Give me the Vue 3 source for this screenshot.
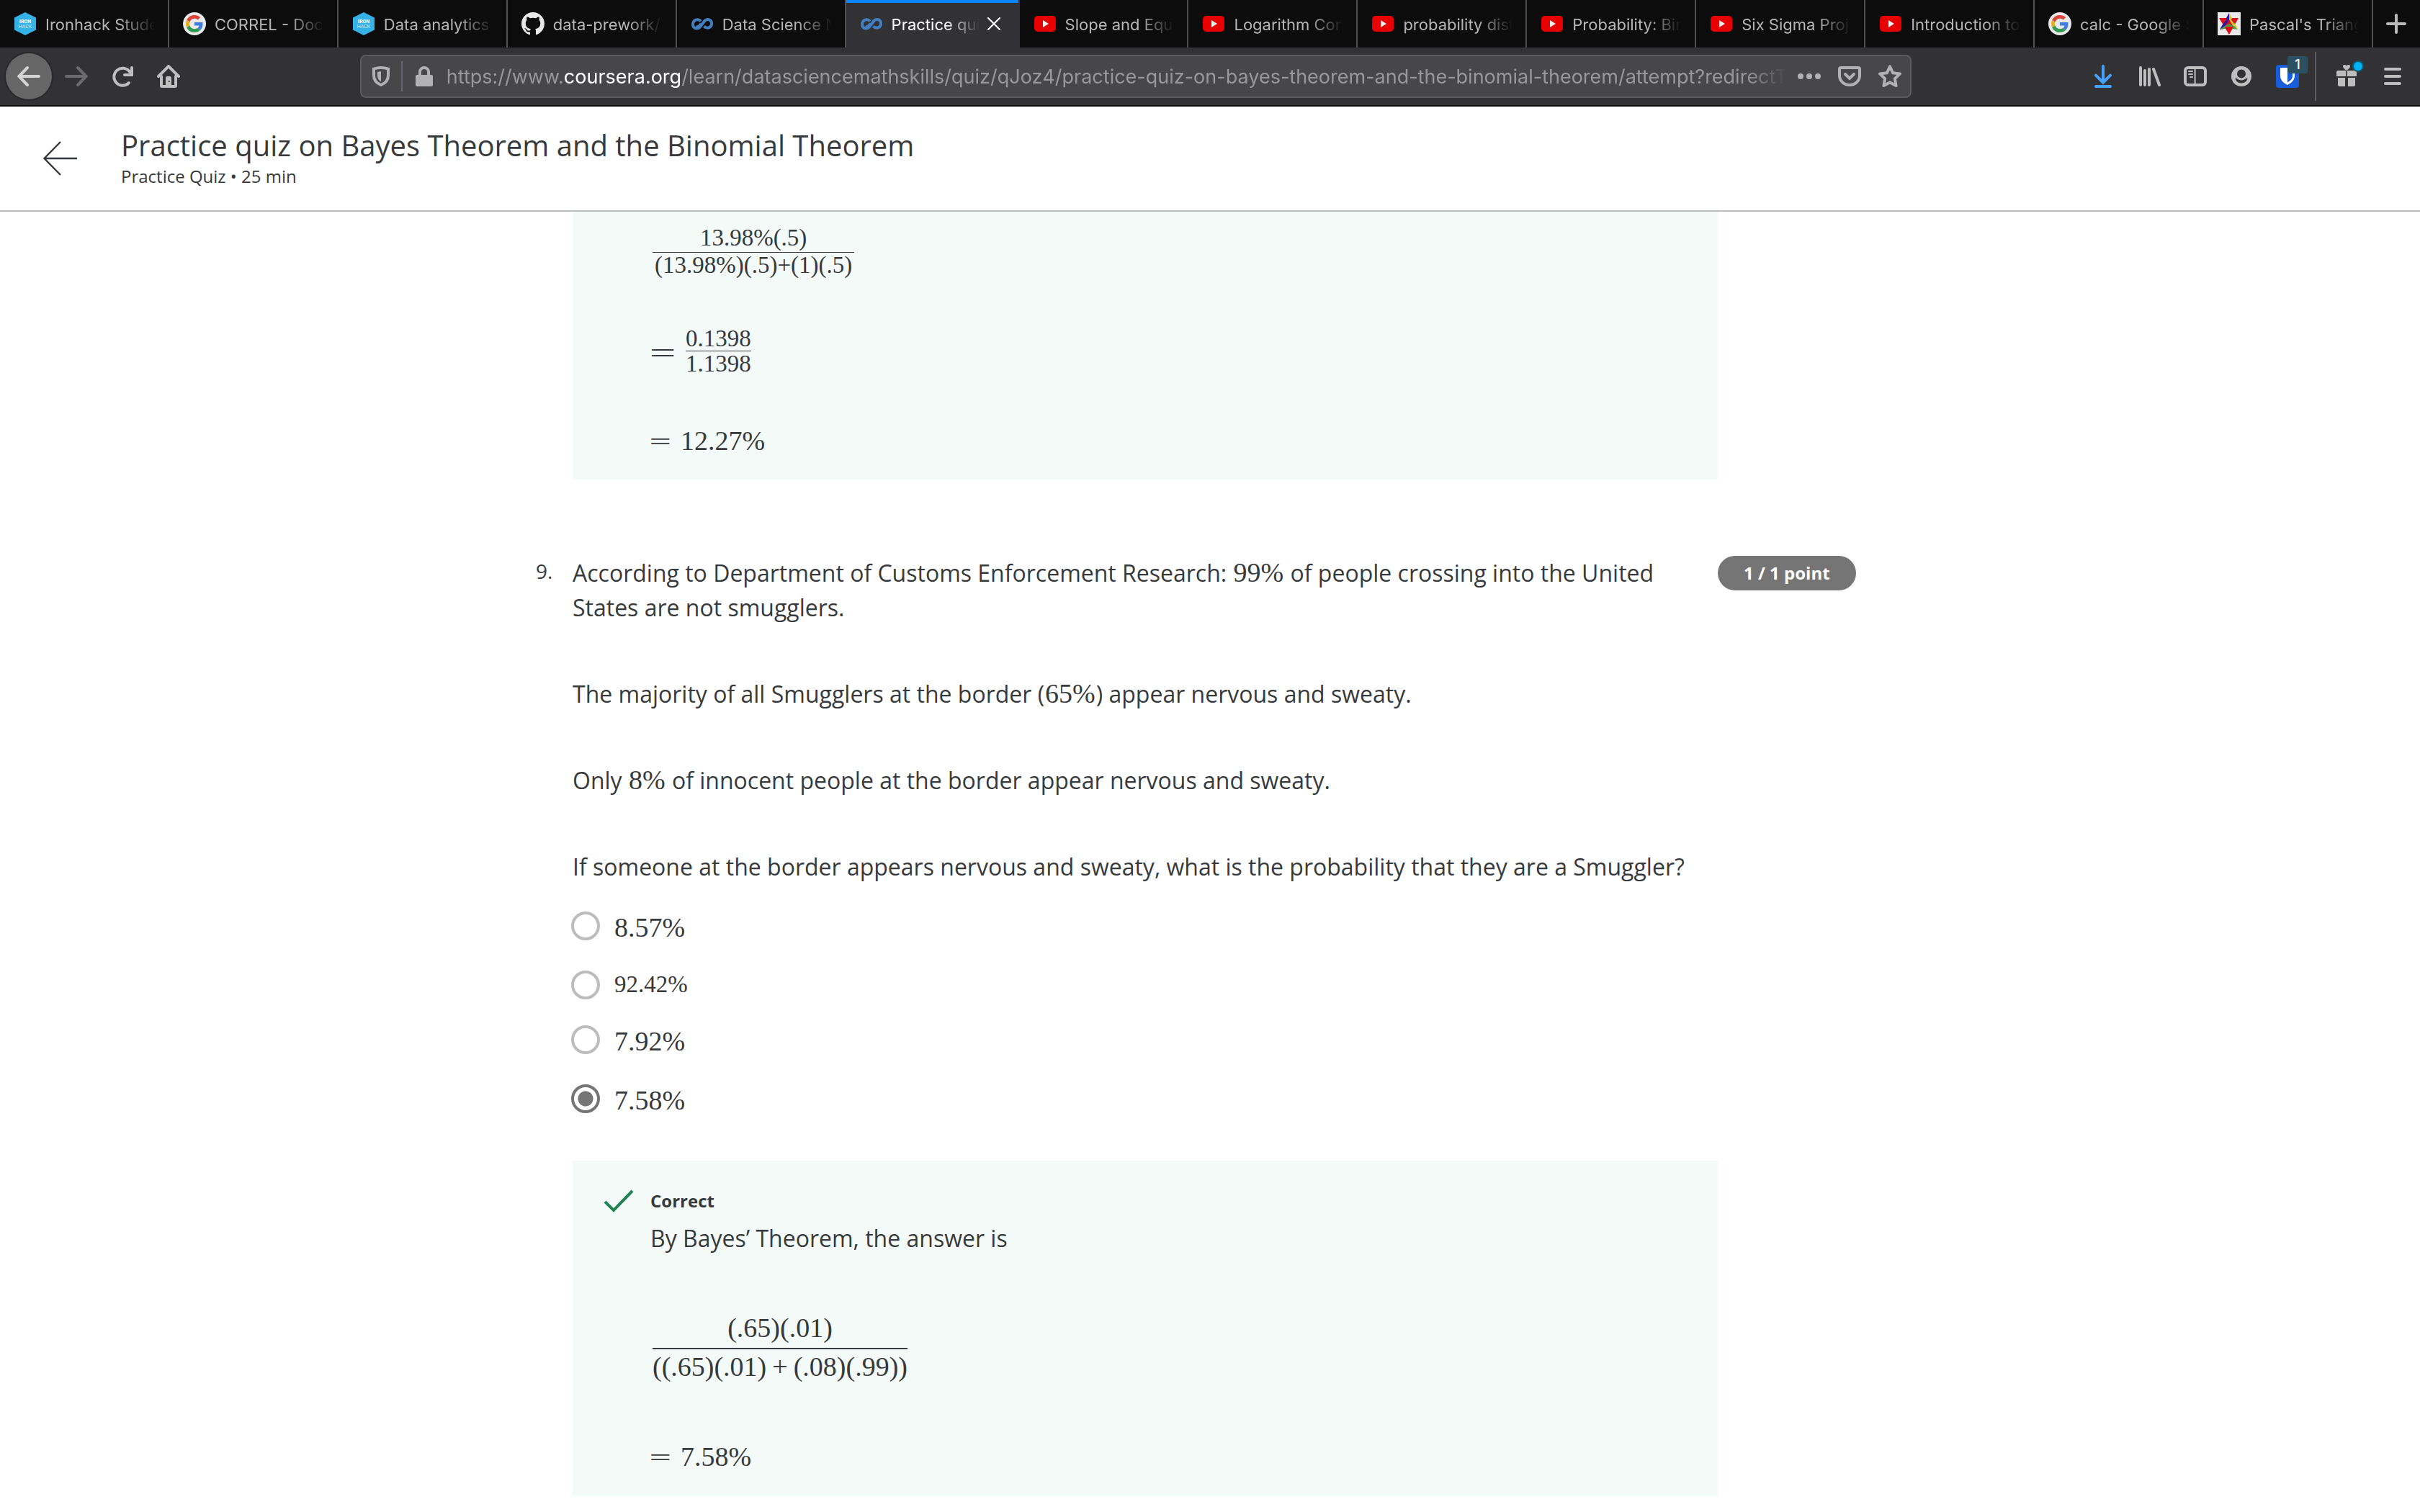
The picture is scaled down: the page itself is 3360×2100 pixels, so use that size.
<script setup>
import { ref } from 'vue'

const tabs = [
  { icon: 'ironhack', title: 'Ironhack Stude' },
  { icon: 'google', title: 'CORREL - Docs' },
  { icon: 'ironhack', title: 'Data analytics' },
  { icon: 'github', title: 'data-prework/2' },
  { icon: 'coursera', title: 'Data Science M' },
  { icon: 'coursera', title: 'Practice qui', active: true },
  { icon: 'youtube', title: 'Slope and Equa' },
  { icon: 'youtube', title: 'Logarithm Con' },
  { icon: 'youtube', title: 'probability dist' },
  { icon: 'youtube', title: 'Probability: Bin' },
  { icon: 'youtube', title: 'Six Sigma Proj' },
  { icon: 'youtube', title: 'Introduction to' },
  { icon: 'google', title: 'calc - Google S' },
  { icon: 'pascal', title: "Pascal's Triang" },
]

const options = [
  { value: '8.57%' },
  { value: '92.42%', small: true },
  { value: '7.92%' },
  { value: '7.58%' },
]
const answer = ref('7.58%')
</script>

<template>
  <div class="window">
    <div class="tabbar">
      <div v-for="(tab, i) in tabs" :key="i" class="tab" :class="{ active: tab.active }">
        <button class="tab-button" type="button">
          <svg v-if="tab.icon === 'ironhack'" class="favicon" viewBox="0 0 32 32">
            <path d="M16 0 31 7.500V24.500L16 32 1 24.500V7.500z" fill="#34b1e6" />
            <text x="16" y="15" text-anchor="middle" class="hex-name">IRON</text>
            <text x="16" y="22" text-anchor="middle" class="hex-name light">HACK</text>
          </svg>
          <svg v-else-if="tab.icon === 'google'" class="favicon" viewBox="0 0 32 32">
            <circle cx="16" cy="16" r="16" fill="#e9e9e9" />
            <g transform="translate(4 4) scale(.5)">
              <path fill="#db4437" d="M24 9.500c3.540 0 6.710 1.220 9.210 3.600l6.850-6.850C35.900 2.380 30.470 0 24 0 14.620 0 6.510 5.380 2.560 13.220l7.980 6.190C12.430 13.720 17.740 9.500 24 9.500z" />
              <path fill="#3f7ee0" d="M46.980 24.550c0-1.570-.15-3.090-.38-4.550H24v9.020h12.940c-.58 2.960-2.260 5.480-4.780 7.180l7.730 6c4.510-4.180 7.090-10.360 7.090-17.650z" />
              <path fill="#e6b023" d="M10.530 28.590c-.48-1.450-.76-2.990-.76-4.590s.27-3.140.76-4.590l-7.980-6.190C.92 16.460 0 20.120 0 24c0 3.880.92 7.540 2.560 10.780l7.970-6.190z" />
              <path fill="#329b50" d="M24 48c6.480 0 11.930-2.130 15.890-5.810l-7.730-6c-2.150 1.450-4.920 2.300-8.160 2.300-6.260 0-11.570-4.220-13.470-9.910l-7.980 6.190C6.510 42.620 14.620 48 24 48z" />
            </g>
          </svg>
          <svg v-else-if="tab.icon === 'github'" class="favicon" viewBox="0 0 16 16">
            <path fill="#e8e8e8" d="M8 0C3.580 0 0 3.580 0 8c0 3.540 2.290 6.530 5.470 7.590.4.070.55-.17.55-.38 0-.19-.01-.82-.01-1.490-2.010.37-2.530-.49-2.690-.94-.09-.23-.48-.94-.82-1.130-.28-.15-.68-.52-.01-.53.63-.01 1.080.58 1.230.82.72 1.210 1.870.87 2.330.66.07-.52.28-.87.51-1.070-1.780-.2-3.640-.89-3.640-3.950 0-.87.31-1.590.82-2.150-.08-.2-.36-1.020.08-2.120 0 0 .67-.21 2.200.82.64-.18 1.320-.27 2-.27s1.360.09 2 .27c1.530-1.040 2.200-.82 2.200-.82.44 1.100.16 1.920.08 2.120.51.56.82 1.270.82 2.150 0 3.070-1.870 3.750-3.650 3.950.29.25.54.73.54 1.480 0 1.070-.01 1.930-.01 2.200 0 .21.15.46.55.38A8.010 8.010 0 0 0 16 8c0-4.420-3.580-8-8-8z" />
          </svg>
          <svg v-else-if="tab.icon === 'coursera'" class="favicon" viewBox="0 0 32 32">
            <path d="M14 12C12 9.500 8 9 5.500 11S2 17.500 4 20s6 3 8.500.5l7-9C22 9 26 9 28 11.500s1.500 6.500-1 8.500-6.500 1.500-8.500-1M14.500 15.500l-2.500 3c-1.500 1.500-3 1.500-4.500.5" transform="translate(0 .4)" fill="none" stroke="#417fc0" stroke-width="4" stroke-linecap="butt" />
          </svg>
          <svg v-else-if="tab.icon === 'youtube'" class="favicon" viewBox="0 0 32 32">
            <rect x="1" y="5" width="30" height="22" rx="5" fill="#e80000" />
            <path d="M13 11l8 5-8 5z" fill="#eee" />
          </svg>
          <svg v-else class="favicon" viewBox="0 0 32 32">
            <path fill="#e9e9e9" d="M0 0h32v32H0z" />
            <path fill="#e00c18" d="M2 8h27L16 31z" />
            <path fill="#2b17a8" d="M16 1 3 24l5-1 8-13z" />
            <path fill="#d4cc2c" d="M16 1v9l7 12 5 1z" />
            <path fill="#4c9a4a" d="M3 24l7-5 6-3 6 3 6 5-7-1H9z" />
            <path fill="#e00c18" d="M10 20h12l-6 10zM4 9h9l-5 7zM18 9h10l-5 7z" />
          </svg>
          <span class="tab-title">{{ tab.title }}</span>
        </button>
        <button v-if="tab.active" class="close" type="button" aria-label="Close tab">
          <svg viewBox="0 0 20 20" width="20" height="20"><path d="M2 2l16 16M18 2 2 18" stroke="#fff" stroke-width="2" stroke-linecap="round" /></svg>
        </button>
      </div>
      <button class="new-tab" type="button" aria-label="New tab">
        <svg viewBox="0 0 28 28" width="28" height="28"><path d="M14 2v24M2 14h24" stroke="#b9b9ba" stroke-width="4" stroke-linecap="round" /></svg>
      </button>
    </div>

    <div class="toolbar">
      <button class="tool back" type="button" aria-label="Back">
        <svg class="glyph" viewBox="0 0 16 16"><path d="M15 8H1.200M7 2 1.200 8 7 14" /></svg>
      </button>
      <button class="tool forward" type="button" aria-label="Forward">
        <svg class="glyph" viewBox="0 0 16 16"><path d="M1 8h13.800M9 2l5.800 6L9 14" /></svg>
      </button>
      <button class="tool" type="button" aria-label="Reload">
        <svg class="glyph" viewBox="0 0 16 16"><path d="M12.500 12.500A6 6 0 1 1 13 4.800" /><path class="solid" d="M15.500 2v5.500a.5.500 0 0 1-.5.500H9.500a1 1 0 0 1-.7-1.700l1-.3h3.700V2a1 1 0 0 1 2 0z" /></svg>
      </button>
      <button class="tool" type="button" aria-label="Home">
        <svg class="glyph" viewBox="0 0 16 16"><path d="M1 8l7-7 7 7M3 8v6.500c0 .3.200.5.500.5h9c.3 0 .5-.2.500-.5V8" /><path class="solid" fill-rule="evenodd" d="M6 15V9.500C6 8.500 6.500 8 7 8h2c.5 0 1 .5 1 1.500V15zM8 11h.8v1H8z" /></svg>
      </button>
      <div class="spring"></div>
      <div class="urlbar">
        <button class="identity shield" type="button" aria-label="Tracking protection">
          <svg class="glyph muted" viewBox="0 0 16 16"><path d="M8 2c2 0 3.500.3 5 .8v4.500c0 3-1.500 5.400-5 6.700-3.500-1.300-5-3.700-5-6.700V2.800C4.500 2.300 6 2 8 2z" /><path class="solid" d="M8 4.600v7.200C6.300 10.700 5.500 9.300 5.500 7.300V5C6.200 4.700 7 4.600 8 4.600z" /></svg>
        </button>
        <span class="url-divider"></span>
        <button class="identity" type="button" aria-label="Connection secure">
          <svg class="glyph muted" viewBox="0 0 16 16"><path d="M5 8V5a3 3 0 0 1 6 0v3" /><rect class="solid" x="2" y="7" width="12" height="8" rx="1" /></svg>
        </button>
        <div class="url" role="textbox" aria-label="Address" contenteditable="true" spellcheck="false">https://www.<span class="domain">coursera.org</span>/learn/datasciencemathskills/quiz/qJoz4/practice-quiz-on-bayes-theorem-and-the-binomial-theorem/attempt?redirectTo</div>
        <button class="page-action" type="button" aria-label="Page actions">
          <svg class="glyph muted" viewBox="0 0 16 16"><circle class="solid" cx="2" cy="8" r="2" /><circle class="solid" cx="8" cy="8" r="2" /><circle class="solid" cx="14" cy="8" r="2" /></svg>
        </button>
        <button class="page-action" type="button" aria-label="Save to Pocket">
          <svg class="glyph muted" viewBox="0 0 16 16"><path d="M2 2h12c.6 0 1 .4 1 1v4.500a7 6.500 0 0 1-14 0V3c0-.6.4-1 1-1zM5 6.500l3 3 3-3" /></svg>
        </button>
        <button class="page-action" type="button" aria-label="Bookmark">
          <svg class="glyph muted" viewBox="0 0 16 16"><path stroke-linejoin="round" d="M8 1.200l2 4.400 5 .6-3.600 3.400.9 4.900L8 12.200l-4.300 2.300.9-4.900L1 6.200l5-.6z" /></svg>
        </button>
      </div>
      <div class="spring"></div>
      <button class="tool download" type="button" aria-label="Downloads">
        <svg class="glyph" viewBox="0 0 16 16"><path d="M8 1v11M3 7.300l5 5 5-5M3 15h10" /></svg>
      </button>
      <button class="tool" type="button" aria-label="Library">
        <svg class="glyph" viewBox="0 0 16 16"><path d="M2 2v12M5 4v10M8 3v11M11 3l4 11" /></svg>
      </button>
      <button class="tool" type="button" aria-label="Sidebars">
        <svg class="glyph" viewBox="0 0 16 16"><rect x="1" y="2" width="14" height="12" rx="2" /><path stroke-width="1" d="M7.800 3v10M3.500 4.500H6M3.500 6.500H6M4.500 8.500H6" /></svg>
      </button>
      <button class="tool" type="button" aria-label="Account">
        <svg class="glyph" viewBox="0 0 16 16"><circle class="solid" cx="8" cy="8" r="7" /><g fill="#323234" stroke="none"><circle cx="8" cy="6.200" r="3" /><path d="M3.800 9.300c1.400 0 2 1.500 4.200 1.500s2.800-1.500 4.200-1.500c0 1.900-1.800 3.400-4.200 3.400s-4.200-1.500-4.200-3.400z" /></g></svg>
      </button>
      <button class="tool vault" type="button" aria-label="Bitwarden">
        <svg class="glyph" viewBox="0 0 32 32"><rect width="32" height="32" rx="4" fill="#175ddc" stroke="none" /><path d="M16 4h10v11c0 6-4 10-10 13C10 25 6 21 6 15V4zm0 3v17.500c4-2.300 7-5 7-9V7z" fill="#fff" stroke="none" fill-rule="evenodd" /></svg>
        <span class="badge">1</span>
      </button>
      <span class="separator"></span>
      <button class="tool gift" type="button" aria-label="What's new">
        <svg class="glyph" viewBox="0 0 16 16"><path class="solid" d="M2 4h5.600v4H1V5a1 1 0 0 1 1-1zM8.400 4H14a1 1 0 0 1 1 1v3H8.400zM2 9h5v6H3a1 1 0 0 1-1-1zM9 9h5v5a1 1 0 0 1-1 1H9zM8 4C6.300 2.700 5.500 2 5.500 1c0-1.200 1.800-1.500 2.500-.2.700-1.300 2.500-1 2.500.2 0 1-.8 1.700-2.500 3z" /></svg>
        <span class="dot"></span>
      </button>
      <button class="tool" type="button" aria-label="Menu">
        <svg class="glyph" viewBox="0 0 16 16"><path d="M3 3h10M3 8h10M3 13h10" /></svg>
      </button>
    </div>

    <header class="quiz-header">
      <a class="leave" href="#" aria-label="Back to course">
        <svg viewBox="0 0 48 48" width="48" height="48"><path d="M47 24H2M24 1 1.500 24 24 47" fill="none" stroke="#373a3c" stroke-width="2.400" /></svg>
      </a>
      <div>
        <h1>Practice quiz on Bayes Theorem and the Binomial Theorem</h1>
        <p class="kind">Practice Quiz • 25 min</p>
      </div>
    </header>

    <main class="quiz">
      <section class="feedback previous">
        <div class="fraction small spaced">
          <span class="top">13.98%(.5)</span>
          <span class="bottom">(13.98%)(.5)+(1)(.5)</span>
        </div>
        <div class="equation">
          <span class="equals big">=</span>
          <div class="fraction small">
            <span class="top">0.1398</span>
            <span class="bottom">1.1398</span>
          </div>
        </div>
        <div class="equation result"><span class="equals">=</span><span class="math">12.27%</span></div>
      </section>

      <section class="question">
        <span class="number">9.</span>
        <div class="body">
          <p>According to Department of Customs Enforcement Research: <span class="math">99%</span> of people crossing into the United States are not smugglers.</p>
          <p>The majority of all Smugglers at the border (<span class="math">65%</span>) appear nervous and sweaty.</p>
          <p>Only <span class="math">8%</span> of innocent people at the border appear nervous and sweaty.</p>
          <p>If someone at the border appears nervous and sweaty, what is the probability that they are a Smuggler?</p>
          <div class="options">
            <label v-for="o in options" :key="o.value" class="option" :class="{ small: o.small }">
              <input v-model="answer" type="radio" name="answer" :value="o.value" />
              <span>{{ o.value }}</span>
            </label>
          </div>
        </div>
        <span class="points">1 / 1 point</span>
      </section>

      <section class="feedback current">
        <svg class="tick" viewBox="0 0 42 32" width="42" height="32"><path d="M2 17l12 12L40 2" fill="none" stroke="#1f8354" stroke-width="4" /></svg>
        <div>
          <h2>Correct</h2>
          <p class="intro">By Bayes’ Theorem, the answer is</p>
          <div class="fraction">
            <span class="top">(.65)(.01)</span>
            <span class="bottom">((.65)(.01)<span class="operator">+</span>(.08)(.99))</span>
          </div>
          <div class="equation result"><span class="equals">=</span><span class="math">7.58%</span></div>
        </div>
      </section>
    </main>
  </div>
</template>

<style>
body {
  margin: 0;
  background: #fff;
}
</style>

<style scoped>
.window {
  font-family: "Open Sans", sans-serif;
  color: #373a3c;
  min-height: 100vh;
  background: #fff;
}
button {
  appearance: none;
  border: 0;
  background: none;
  padding: 0;
  margin: 0;
  color: inherit;
  font: inherit;
}
p, h1, h2 {
  margin: 0;
  font-weight: 400;
}

/* tabs */
.tabbar {
  display: flex;
  height: 66px;
  background: #0c0c0d;
  font-family: Inter, sans-serif;
  font-size: 22px;
  color: #b6b6b7;
}
.tab {
  flex: 1 1 0;
  min-width: 0;
  display: flex;
  align-items: center;
  box-sizing: border-box;
  border-right: 2px solid #4f4f50;
  padding: 0 18px 0 19px;
}
.tab.active {
  background: #323234;
  color: #fff;
  box-shadow: inset 0 4px #0a84ff;
  border-right-color: #323234;
  padding-right: 24px;
}
.tab-button {
  flex: 1;
  min-width: 0;
  display: flex;
  align-items: center;
  gap: 12px;
  height: 66px;
}
.favicon {
  width: 32px;
  height: 32px;
  flex: none;
}
.hex-name {
  font-family: Roboto, sans-serif;
  font-size: 7px;
  font-weight: 700;
  fill: #fff;
}
.hex-name.light {
  font-weight: 300;
}
.tab-title {
  flex: 1;
  overflow: hidden;
  white-space: nowrap;
  text-align: left;
  line-height: 28px;
  padding-top: 2px;
  mask-image: linear-gradient(to left, transparent, #000 48px);
}
.close {
  display: flex;
  margin-left: 10px;
}
.new-tab {
  width: 65px;
  display: flex;
  align-items: center;
  justify-content: center;
}

/* navigation toolbar */
.toolbar {
  display: flex;
  align-items: center;
  height: 80px;
  padding: 0 6px 0 8px;
  background: #323234;
  border-bottom: 2px solid #0c0c0d;
  color: #bebebf;
}
.tool {
  position: relative;
  width: 64px;
  height: 64px;
  flex: none;
  display: flex;
  align-items: center;
  justify-content: center;
}
.glyph {
  width: 32px;
  height: 32px;
  fill: none;
  stroke: currentColor;
  stroke-width: 2;
  stroke-linecap: round;
}
.glyph .solid {
  fill: currentColor;
  stroke: none;
}
.glyph.muted {
  color: #b1b1b3;
}
.back {
  margin-right: 2px;
  border-radius: 50%;
  background: #666667;
  box-shadow: 0 0 0 2px #29292b;
  color: #d4d4d4;
}
.forward {
  color: #6b6b6d;
}
.download {
  color: #45a1ff;
}
.spring {
  flex: 1 1 0;
}
.urlbar {
  flex: 9.2 1 0;
  min-width: 0;
  display: flex;
  align-items: center;
  box-sizing: border-box;
  height: 60px;
  border: 2px solid #5b5b5d;
  border-radius: 8px;
  background: #474749;
}
.identity {
  display: flex;
  justify-content: center;
  width: 60px;
}
.identity.shield {
  width: 55px;
}
.url-divider {
  width: 2px;
  height: 42px;
  background: #64646f;
}
.url {
  flex: 1;
  min-width: 0;
  overflow: hidden;
  white-space: nowrap;
  font-family: Inter, sans-serif;
  font-size: 27px;
  line-height: 40px;
  padding-top: 2px;
  margin: 0 4px 0 1px;
  color: #98989a;
  mask-image: linear-gradient(to left, transparent, #000 56px);
}
.domain {
  color: #fff;
}
.page-action {
  display: flex;
  justify-content: center;
  width: 56px;
}
.badge {
  position: absolute;
  top: 4px;
  right: 4px;
  width: 28px;
  height: 24px;
  border-radius: 3px;
  background: #2a5062;
  color: #fff;
  font: 500 18px/24px Inter, sans-serif;
  text-align: center;
}
.dot {
  position: absolute;
  top: 12px;
  right: 10px;
  width: 12px;
  height: 12px;
  border-radius: 50%;
  background: #00b3f4;
  box-shadow: 0 0 0 2px #115871;
}
.separator {
  width: 2px;
  height: 68px;
  margin: 0 10px 0 6px;
  background: #5b5b5d;
}

/* page header */
.quiz-header {
  display: flex;
  height: 144px;
  border-bottom: 2px solid #bbbdbd;
}
.leave {
  width: 168px;
  box-sizing: border-box;
  padding: 48px 0 0 60px;
}
h1 {
  padding-top: 27px;
  font-size: 40px;
  line-height: 54px;
}
.kind {
  font-size: 24px;
  line-height: 32px;
}

/* quiz column */
.quiz {
  max-width: 1920px;
  margin: 0 auto;
}
.feedback {
  margin: 0 255px 0 75px;
  background: #f3faf8;
}
.previous {
  padding: 19px 32px 32px 108px;
}
.previous > .equation {
  margin-top: 68px;
}
.question {
  display: grid;
  grid-template-columns: 51px 1fr 255px;
  margin: 106px 0 0 24px;
  align-items: start;
}
.number {
  font-size: 28px;
  line-height: 42px;
}
.body {
  font-size: 32px;
  line-height: 48px;
}
.body p + p {
  margin-top: 72px;
}
.points {
  justify-self: start;
  padding: 0 36px;
  border-radius: 24px;
  background: #757575;
  color: #fff;
  font-size: 24px;
  font-weight: 700;
  line-height: 48px;
}
.math, .fraction, .option {
  font-family: "Liberation Serif", serif;
  font-size: 38px;
  line-height: 44px;
}
.body .math {
  padding: 0 1px;
}
.fraction {
  display: inline-flex;
  flex-direction: column;
  margin-left: 3px;
  text-align: center;
}
.fraction .top {
  padding-bottom: 6px;
}
.fraction .bottom {
  padding-top: 2px;
  border-top: 2px solid currentColor;
}
.fraction.small {
  font-size: 33px;
  line-height: 34px;
}
.fraction.small .top {
  padding-bottom: 0;
}
.fraction.small.spaced .top {
  padding-bottom: 3px;
}
.fraction.small .bottom {
  padding-top: 0;
  border-top-width: 1px;
}
.fraction.small.spaced .bottom {
  padding: 0 3px;
}
.operator {
  padding: 0 8px;
}
.previous > .fraction {
  display: flex;
  width: max-content;
}
.equation {
  display: flex;
  align-items: center;
}
.equals {
  width: 45px;
  font-family: "DejaVu Sans Light", "DejaVu Sans", sans-serif;
  font-weight: 200;
  font-size: 40px;
  line-height: 44px;
  margin-left: -3px;
}
.equals.big {
  width: 49px;
  font-size: 48px;
}
.options {
  display: flex;
  flex-direction: column;
  align-items: flex-start;
  gap: 38px;
  margin-top: 38px;
}
.option {
  display: flex;
  align-items: flex-start;
  gap: 20px;
  margin-left: -2px;
}
.option.small {
  font-size: 33px;
  line-height: 38px;
}
.option.small input {
  margin-bottom: -2px;
}
.option input {
  appearance: none;
  box-sizing: border-box;
  width: 40px;
  height: 40px;
  margin: 0;
  border: 4px solid #bdbdbd;
  border-radius: 50%;
}
.option input:checked {
  border-color: #757575;
  background: radial-gradient(circle, #757575 10px, transparent 11px);
}
.current {
  display: grid;
  grid-template-columns: 65px 1fr;
  margin-top: 62px;
  padding: 38px 32px 33px 43px;
}
.tick {
  margin-top: 2px;
}
h2 {
  font-size: 24px;
  line-height: 36px;
  font-weight: 700;
}
.intro {
  margin: 10px 0 78px;
  font-size: 32px;
  line-height: 48px;
}
.current .fraction {
  display: flex;
  width: max-content;
  margin-bottom: 81px;
}
</style>
